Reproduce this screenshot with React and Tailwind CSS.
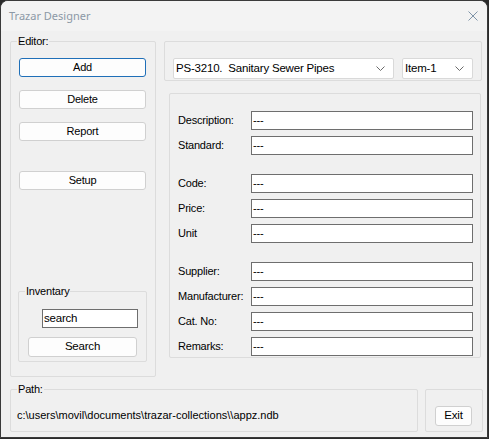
import React from "react";

function Group({ label, className = "", children }) {
  return (
    <div className={"relative border border-[#dcdcdc] rounded-[2px] " + className}>
      {label && (
        <span className="absolute top-[-8px] left-[6px] px-[1px] bg-[#f0f0f0] leading-[14px] text-black">
          {label}
        </span>
      )}
      {children}
    </div>
  );
}

function Button({ children, focused, className = "" }) {
  return (
    <button
      className={
        "flex items-center justify-center bg-[#fdfdfd] rounded-[3px] border text-black leading-none " +
        (focused ? "border-[#1f6fb8] " : "border-[#d0d0d0] ") +
        className
      }
    >
      {children}
    </button>
  );
}

function Combo({ value, className = "" }) {
  return (
    <div
      className={
        "flex items-center justify-between bg-white border border-[#d9d9d9] rounded-[2px] pl-[2px] pr-[8px] text-[11.5px] " +
        className
      }
    >
      <span className="whitespace-pre text-black">{value}</span>
      <svg width="9" height="5" viewBox="0 0 9 5">
        <polyline points="0.5,0.5 4.5,4.5 8.5,0.5" fill="none" stroke="#6b6b6b" strokeWidth="1" />
      </svg>
    </div>
  );
}

function Field({ label, className = "" }) {
  return (
    <div className={"flex items-center h-[19px] " + className}>
      <span className="w-[73px] text-black">{label}</span>
      <div className="w-[222px] h-[19px] bg-white border border-[#6e6e6e] flex items-center pl-[1px] text-black">
        ---
      </div>
    </div>
  );
}

export default function App() {
  return (
    <div className="w-[489px] h-[439px] bg-[#2b2b2b] font-['Liberation_Sans',Arial,sans-serif] text-[11px] tracking-[-0.2px]">
      <div className="w-[488px] h-[438px] rounded-t-[8px] border border-[#3a3a3a] bg-[#f0f0f0] overflow-hidden flex flex-col">
        {/* Title bar */}
        <div className="h-[30px] bg-[#f3f3f3] flex items-center justify-between pl-[8px] pr-[9px]">
          <span className="font-['Noto_Sans',sans-serif] text-[11px] tracking-normal text-[#8c99a6]">
            Trazar Designer
          </span>
          <svg width="10" height="10" viewBox="0 0 10 10">
            <path d="M0.5 0.5 L9.5 9.5 M9.5 0.5 L0.5 9.5" stroke="#7f94a8" strokeWidth="1" />
          </svg>
        </div>

        {/* Body */}
        <div className="flex-1 pt-[10px] pl-[9px] flex flex-col">
          <div className="flex gap-[8px]">
            {/* Editor */}
            <Group label="Editor:" className="w-[146px] h-[336px] flex flex-col pt-[16px] pl-[7px] pb-[14px]">
              <Button focused className="w-[127px] h-[19px] ml-[1px]">Add</Button>
              <Button className="w-[127px] h-[19px] ml-[1px] mt-[13px]">Delete</Button>
              <Button className="w-[127px] h-[19px] ml-[1px] mt-[13px]">Report</Button>
              <Button className="w-[127px] h-[19px] ml-[1px] mt-[30px]">Setup</Button>

              <Group label="Inventary" className="mt-auto w-[129px] h-[71px] flex flex-col items-start pt-[17px]">
                <div className="ml-[23px] w-[96px] h-[19px] bg-white border border-[#6e6e6e] flex items-center pl-[1px] text-black text-[11.5px]">
                  search
                </div>
                <Button className="ml-[9px] mt-[9px] w-[109px] h-[20px] text-[11.5px]">Search</Button>
              </Group>
            </Group>

            {/* Right column */}
            <div className="flex flex-col">
              <Group className="w-[318px] h-[40px] flex items-start gap-[8px] pt-[16px] pl-[8px]">
                <Combo value="PS-3210.  Sanitary Sewer Pipes" className="w-[221px] h-[21px]" />
                <Combo value="Item-1" className="w-[71px] h-[21px]" />
              </Group>

              <Group className="ml-[5px] mt-[12px] w-[312px] h-[265px] flex flex-col pt-[17px] pl-[8px] gap-[6px]">
                <Field label="Description:" />
                <Field label="Standard:" />
                <Field label="Code:" className="mt-[13px]" />
                <Field label="Price:" />
                <Field label="Unit" />
                <Field label="Supplier:" className="mt-[13px]" />
                <Field label="Manufacturer:" />
                <Field label="Cat. No:" />
                <Field label="Remarks:" />
              </Group>
            </div>
          </div>

          {/* Bottom row */}
          <div className="flex gap-[7px] mt-[12px]">
            <Group label="Path:" className="w-[408px] h-[43px] flex items-center pl-[6px] pt-[9px]">
              <span className="text-black whitespace-pre tracking-normal">c:\users\movil\documents\trazar-collections\\appz.ndb</span>
            </Group>
            <Group className="w-[58px] h-[43px] pt-[16px] pl-[9px]">
              <Button className="w-[37px] h-[20px] text-[11.5px]">Exit</Button>
            </Group>
          </div>
        </div>
      </div>
    </div>
  );
}
